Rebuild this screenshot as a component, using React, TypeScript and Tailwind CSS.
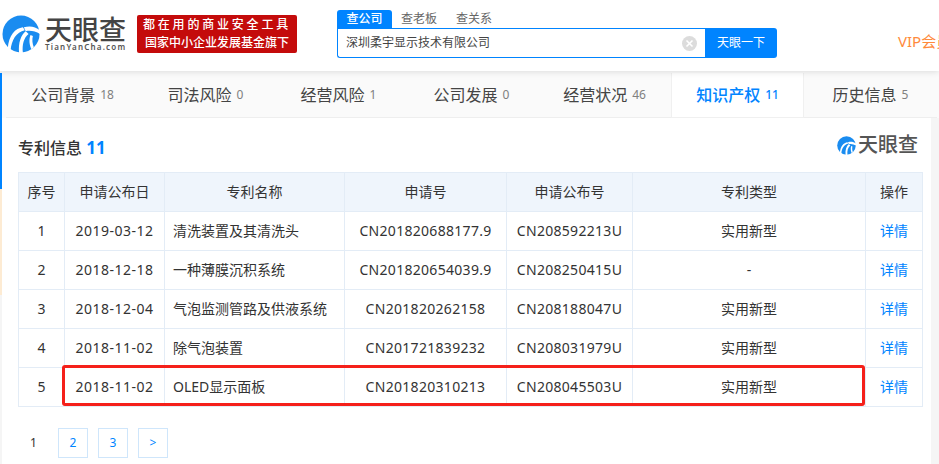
const rows = [
  { no: 1, date: '2019-03-12', name: '清洗装置及其清洗头', apply: 'CN201820688177.9', pub: 'CN208592213U', type: '实用新型' },
  { no: 2, date: '2018-12-18', name: '一种薄膜沉积系统', apply: 'CN201820654039.9', pub: 'CN208250415U', type: '-' },
  { no: 3, date: '2018-12-04', name: '气泡监测管路及供液系统', apply: 'CN201820262158', pub: 'CN208188047U', type: '实用新型' },
  { no: 4, date: '2018-11-02', name: '除气泡装置', apply: 'CN201721839232', pub: 'CN208031979U', type: '实用新型' },
  { no: 5, date: '2018-11-02', name: 'OLED显示面板', apply: 'CN201820310213', pub: 'CN208045503U', type: '实用新型' },
]

const tabs = [
  { label: '公司背景', count: 18 },
  { label: '司法风险', count: 0 },
  { label: '经营风险', count: 1 },
  { label: '公司发展', count: 0 },
  { label: '经营状况', count: 46 },
  { label: '知识产权', count: 11, active: true },
  { label: '历史信息', count: 5 },
]

const cell = 'border border-[#e3ecf6] pb-[2px]'

function LogoMark({ size }: { size: number }) {
  return (
    <svg width={size} height={size} viewBox="0 0 40 40" className="shrink-0">
      <circle cx="20" cy="20" r="19.5" fill="#1a8cf0" />
      {/* white swooshes out of the eye */}
      <path d="M22 13C14 14 7 21 6 36L9 37.5C10 26 15 18 24 16Z" fill="#fff" />
      <path d="M25 17C20 21 17 29 18 40L22 40C21 31 23 24 28 20Z" fill="#fff" />
      <path d="M30 21C28 26 29 32 31 36L33.5 34C32 30 31.5 26 32.5 22Z" fill="#fff" />
      <path d="M23 13C29 11 35 12 40 16L40 20C35 17 30 16 25 17Z" fill="#fff" />
    </svg>
  )
}

export default function App() {
  return (
    <div className="w-[939px] h-[464px] overflow-hidden bg-[#f5f5f5] text-[#333] font-['Noto_Sans','Noto_Sans_CJK_SC',sans-serif]">
      {/* Header */}
      <div className="h-[71px] bg-white flex items-start shadow-[0_1px_6px_rgba(0,0,0,0.12)] relative z-10">
        <div className="ml-[2px] mt-[15px] flex items-start shrink-0">
          <LogoMark size={38} />
          <div className="ml-[5px] w-[85px] shrink-0 pt-[2px]">
            <div className="text-[27px] leading-[25px] font-medium text-[#444] whitespace-nowrap">天眼查</div>
            <div className="text-[8px] leading-[9px] font-semibold text-[#555] tracking-[1.2px] whitespace-nowrap">TianYanCha.com</div>
          </div>
        </div>
        <div className="ml-[7px] mt-[15px] w-[160px] h-[38px] shrink-0 bg-[#c40b0b] rounded-[2px] text-white text-center font-medium">
          <div className="text-[12px] leading-[19px] tracking-[2.8px] whitespace-nowrap">都在用的商业安全工具</div>
          <div className="text-[12px] leading-[18px] whitespace-nowrap">国家中小企业发展基金旗下</div>
        </div>
        <div className="ml-[40px] mt-[10px] shrink-0">
          <div className="flex text-[12px] leading-[18px] h-[18px]">
            <div className="w-[55px] bg-[#0084ff] text-white text-center rounded-t-[3px] font-medium">查公司</div>
            <div className="ml-[9px] text-[#666] w-[46px]">查老板</div>
            <div className="ml-[9px] text-[#666]">查关系</div>
          </div>
          <div className="flex w-[440px] h-[30px]">
            <div className="flex-1 border border-[#0084ff] border-r-0 rounded-bl-[3px] bg-white flex items-center pl-[8px] pr-[8px] text-[12px] text-[#444]">
              <span className="flex-1">深圳柔宇显示技术有限公司</span>
              <span className="w-[15px] h-[15px] rounded-full bg-[#dcdcdc] text-white flex items-center justify-center">
                <svg width="9" height="9" viewBox="0 0 9 9"><path d="M1.5 1.5L7.5 7.5M7.5 1.5L1.5 7.5" stroke="#fff" strokeWidth="1.6" /></svg>
              </span>
            </div>
            <div className="w-[72px] bg-[#0084ff] text-white text-[12px] flex items-center justify-center rounded-r-[3px]">天眼一下</div>
          </div>
        </div>
        <div className="ml-[121px] mt-[31px] text-[15px] leading-[20px] text-[#ff8a3c] whitespace-nowrap">VIP会员</div>
      </div>

      {/* Card */}
      <div className="relative ml-[2px] w-[929px] h-[393px] bg-white">
        <div className="absolute left-[-2px] top-[2px] w-[2px] h-[116px] bg-[#0084ff]" />
        <div className="absolute left-[-2px] top-[118px] w-[2px] h-[106px] bg-[#fdebd3]" />
        {/* Tabs */}
        <div className="flex w-[937px] h-[47px] bg-[#fafafa] pl-[4px] pt-[2px]">
          {tabs.map((t) => (
            <div
              key={t.label}
              className={`w-[133px] shrink-0 flex items-center justify-center whitespace-nowrap border-b ${
                t.active ? 'bg-white border-x border-[#f0f0f0] text-[#0084ff] font-medium' : 'border-[#eee] text-[#444]'
              }`}
            >
              <span className="text-[16px]">{t.label}</span>
              <span className={`ml-[5px] text-[12px] ${t.active ? 'text-[#0084ff]' : 'text-[#808080]'}`}>{t.count}</span>
            </div>
          ))}
        </div>

        <div className="pl-[16px] pr-[9px]">
          <div className="flex items-center justify-between h-[54px] pr-[4px]">
            <div className="text-[16px] font-medium text-[#333] pt-[6px]">
              专利信息 <span className="text-[#0084ff] font-bold text-[17px]">11</span>
            </div>
            <div className="flex items-center">
              <LogoMark size={19} />
              <span className="ml-[2px] text-[20px] leading-[22px] font-medium text-[#555] whitespace-nowrap">天眼查</span>
            </div>
          </div>

          <table className="w-[904px] table-fixed border-collapse text-[14px] text-[#333]">
            <colgroup>
              <col className="w-[46px]" />
              <col className="w-[100px]" />
              <col className="w-[180px]" />
              <col className="w-[162px]" />
              <col className="w-[126px]" />
              <col className="w-[233px]" />
              <col className="w-[57px]" />
            </colgroup>
            <thead>
              <tr className="h-[39px] bg-[#eff5fc]">
                {['序号', '申请公布日', '专利名称', '申请号', '申请公布号', '专利类型', '操作'].map((h) => (
                  <th key={h} className={`${cell} font-normal text-center`}>{h}</th>
                ))}
              </tr>
            </thead>
            <tbody>
              {rows.map((r) => (
                <tr key={r.no} className="h-[39px]">
                  <td className={`${cell} text-center`}>{r.no}</td>
                  <td className={`${cell} text-center tracking-[0.5px]`}>{r.date}</td>
                  <td className={`${cell} pl-[8px]`}>{r.name}</td>
                  <td className={`${cell} text-center tracking-[0.3px]`}>{r.apply}</td>
                  <td className={`${cell} text-center tracking-[0.3px]`}>{r.pub}</td>
                  <td className={`${cell} text-center`}>{r.type}</td>
                  <td className={`${cell} text-center text-[#0084ff]`}>详情</td>
                </tr>
              ))}
            </tbody>
          </table>

          <div className="flex items-center mt-[21px] text-[12px]">
            <div className="w-[40px] pl-[12px]">1</div>
            {['2', '3', '>'].map((p) => (
              <div key={p} className="w-[30px] h-[30px] mr-[10px] border border-[#cfe6fb] text-[#0084ff] flex items-center justify-center">{p}</div>
            ))}
          </div>
        </div>

        {/* highlight box drawn over the table */}
        <div className="absolute left-[60px] top-[294px] w-[803px] h-[41px] border-[3px] border-[#f5201a] rounded-[3px]" />
      </div>
    </div>
  )
}
